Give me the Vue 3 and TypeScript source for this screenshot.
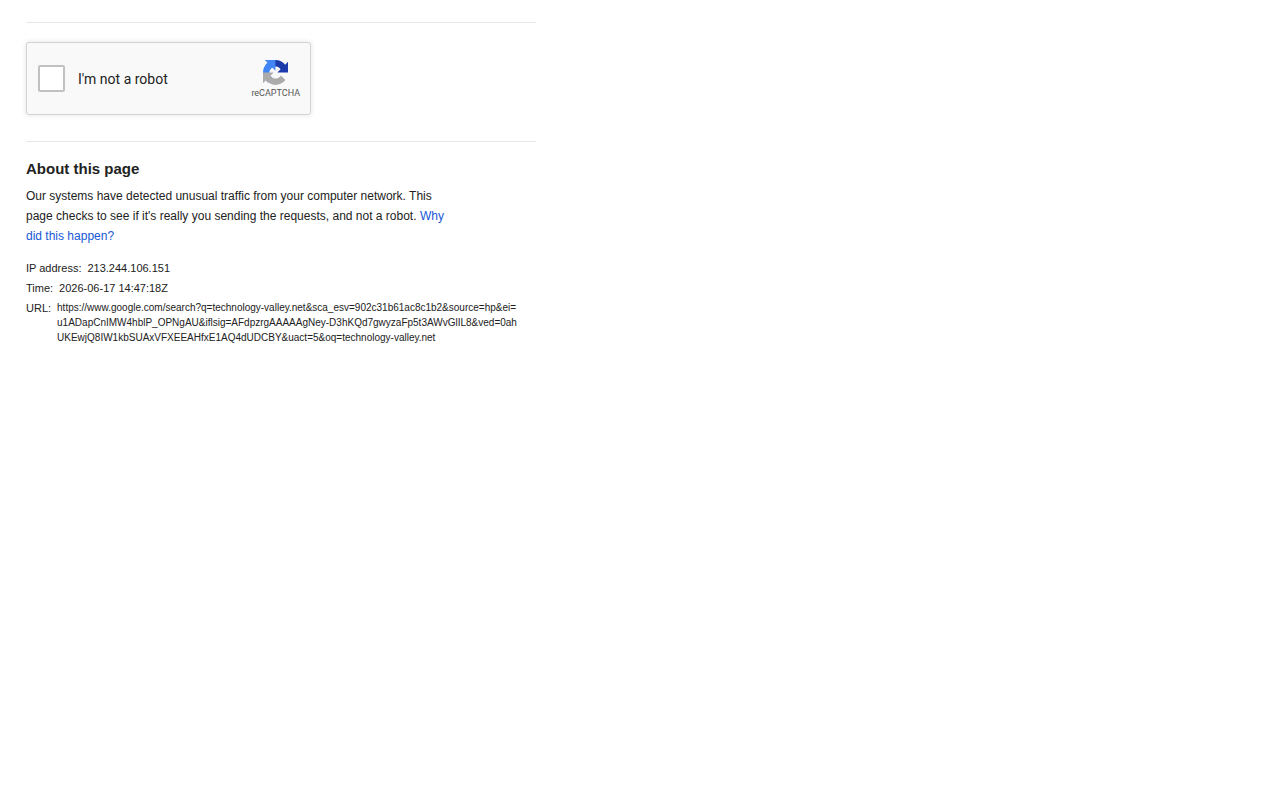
<script setup lang="ts">
import { ref } from 'vue'

const checked = ref(false)
const ip = '213.244.106.151'
const time = '2026-06-17 14:47:18Z'
const urlParts: string[] = [
  'https://www.google.com/search?q=technology-valley.net&sca_esv=902c31b61ac8c1b2&source=hp&ei=',
  'u1ADapCnIMW4hblP_OPNgAU&iflsig=AFdpzrgAAAAAgNey-D3hKQd7gwyzaFp5t3AWvGlIL8&ved=0ah',
  'UKEwjQ8IW1kbSUAxVFXEEAHfxE1AQ4dUDCBY&uact=5&oq=technology-valley.net',
]
</script>

<template>
  <main class="page">
    <hr class="rule" />
    <form class="captcha" @submit.prevent>
      <label class="check" for="not-robot">
        <input id="not-robot" v-model="checked" type="checkbox" class="box" />
        <span>I'm not a robot</span>
      </label>
      <div class="brand">
        <svg class="logo" viewBox="0 0 64 64" aria-hidden="true">
          <path fill="#1c3aa9" d="M64 31.955l-.033-1.37V4.687l-7.16 7.16C50.948 4.674 42.033.093 32.05.093c-10.4 0-19.622 4.96-25.458 12.64l11.736 11.86a15.55 15.55 0 0 1 4.754-5.334c2.05-1.6 4.952-2.906 8.968-2.906.485 0 .86.057 1.135.163 4.976.393 9.288 3.14 11.828 7.124l-8.307 8.307L64 31.953" />
          <path fill="#4285f4" d="M31.862.094l-1.37.033H4.594l7.16 7.16C4.58 13.147 0 22.06 0 32.046c0 10.4 4.96 19.622 12.64 25.458L24.5 45.768a15.55 15.55 0 0 1-5.334-4.754c-1.6-2.05-2.906-4.952-2.906-8.968 0-.485.057-.86.163-1.135.393-4.976 3.14-9.288 7.124-11.828l8.307 8.307L31.86.095" />
          <path fill="#ababab" d="M.001 32.045l.033 1.37v25.898l7.16-7.16c5.86 7.173 14.774 11.754 24.76 11.754 10.4 0 19.622-4.96 25.458-12.64l-11.736-11.86a15.55 15.55 0 0 1-4.754 5.334c-2.05 1.6-4.952 2.906-8.968 2.906-.485 0-.86-.057-1.135-.163-4.976-.393-9.288-3.14-11.828-7.124l8.307-8.307c-10.522.04-22.4.066-27.295-.005" />
        </svg>
        <span class="brand-name">reCAPTCHA</span>
      </div>
    </form>
    <hr class="rule" />
    <h1 class="title">About this page</h1>
    <p class="about">
      Our systems have detected unusual traffic from your computer network. This page checks to see
      if it's really you sending the requests, and not a robot.
      <a href="#why">Why did this happen?</a>
    </p>
    <dl class="details">
      <div class="row"><dt>IP address:</dt><dd>{{ ip }}</dd></div>
      <div class="row"><dt>Time:</dt><dd>{{ time }}</dd></div>
      <div class="row">
        <dt>URL:</dt>
        <dd class="url"><template v-for="part in urlParts" :key="part">{{ part }}<wbr /></template></dd>
      </div>
    </dl>
  </main>
</template>

<style>
body {
  margin: 0;
  background: #fff;
}
</style>

<style scoped>
.page {
  box-sizing: border-box;
  max-width: 562px;
  padding: 22px 26px;
  font-family: "Liberation Sans", Arial, sans-serif;
  font-size: 12px;
  line-height: 20px;
  color: #222;
}
.rule {
  height: 1px;
  margin: 0;
  border: 0;
  background: #e6e6e6;
}
.captcha {
  box-sizing: border-box;
  display: flex;
  align-items: center;
  justify-content: space-between;
  max-width: 285px;
  min-height: 73px;
  margin: 19px 0 26px;
  padding: 0 10px 0 11px;
  border: 1px solid #d3d3d3;
  border-radius: 3px;
  background: #f9f9f9;
  box-shadow: 0 0 4px 1px rgba(0, 0, 0, 0.08);
  font-family: Roboto, sans-serif;
}
.check {
  display: flex;
  align-items: center;
  gap: 13px;
  font-size: 14px;
  color: #222;
}
.box {
  appearance: none;
  box-sizing: border-box;
  width: 27px;
  height: 27px;
  margin: 0;
  border: 2px solid #c1c1c1;
  border-radius: 2px;
  background: #fff;
}
.box:checked {
  background: #4285f4;
}
.brand {
  display: flex;
  flex-direction: column;
  align-items: center;
  gap: 3px;
}
.logo {
  width: 25px;
  height: 25px;
}
.brand-name {
  font-size: 9px;
  line-height: 10px;
  color: #555;
}
.title {
  margin: 17px 0 7px;
  font-size: 15px;
  line-height: 20px;
  font-weight: 700;
}
.about {
  max-width: 432px;
  margin: 0 0 12px;
}
a {
  color: #1558d6;
  text-decoration: none;
}
.details {
  margin: 0;
  font-size: 11px;
}
.row {
  display: flex;
  gap: 6px;
}
dt {
  flex: none;
}
dd {
  margin: 0;
}
.url {
  min-width: 0;
  padding-top: 2px;
  font-size: 10px;
  line-height: 15px;
}
</style>
